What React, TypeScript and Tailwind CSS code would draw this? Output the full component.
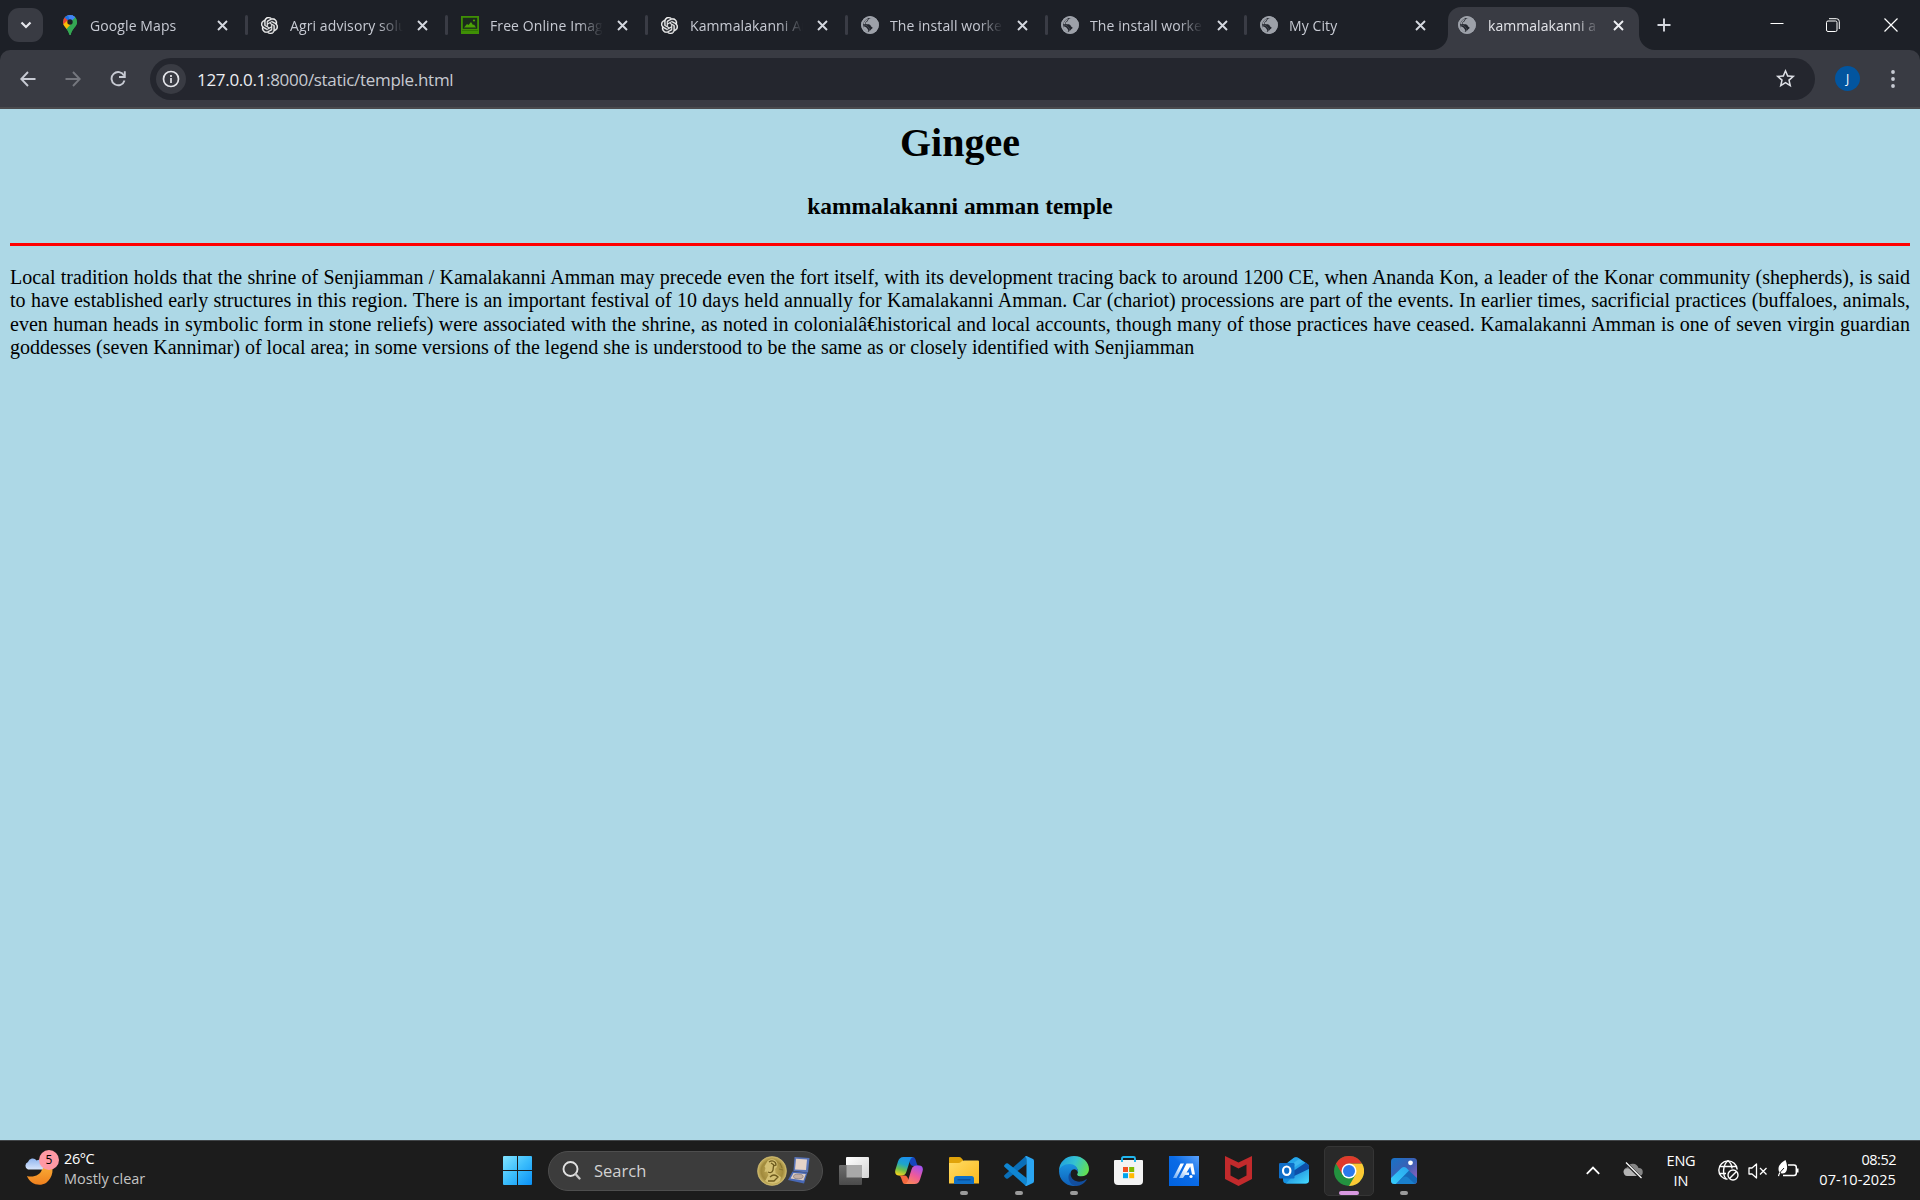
import React from "react";
import { SiOpenai } from "react-icons/si";
import { MdStarBorder } from "react-icons/md";

type Kids = { children?: React.ReactNode };

/* ---------- favicons ---------- */

const MapsPin = () => (
  <svg width="18" height="20" viewBox="0 0 18 20" className="shrink-0">
    <clipPath id="pin">
      <path d="M9 0a7 7 0 0 1 7 7c0 5-5.200 6.500-6.200 12.400q-.8 1.200-1.600 0C7.200 13.500 2 12 2 7a7 7 0 0 1 7-7z" />
    </clipPath>
    <g clipPath="url(#pin)">
      <path d="M0 0h18v20H0z" fill="#34a853" />
      <path d="M1 13 L12 0 H0 V15 Z" fill="#ea4335" />
      <path d="M3.500 2.500 L9 7 L16.500 -1 H4Z" fill="#1a73e8" />
      <path d="M9 7 L14.500 1 L11 -1 L7 0Z" fill="#4285f4" />
      <path d="M16 1 L14.500 2 L5 14 L9 20 H18 V1Z" fill="#34a853" />
      <path d="M14.500 2 L9 7.500 L8 4 L11 0 Z" fill="#4285f4" />
      <path d="M2 9.500 L6.500 5.500 L10 9 L5 14.600Z" fill="#fbbc04" />
    </g>
    <circle cx="9" cy="7" r="2.700" fill="#1d2027" />
  </svg>
);

const OpenAi = () => (
  <div className="flex w-[18px] shrink-0">
    <SiOpenai size={17} color="#f4f4f4" stroke="#f4f4f4" strokeWidth={0.5} />
  </div>
);

const Picture = () => (
  <svg width="18" height="18" viewBox="0 0 18 18" className="shrink-0">
    <path d="M0 0h18v18H0z" fill="#3f8f05" />
    <path d="M1.800 1.800h14.400v11H1.800z" fill="#1b2a1c" />
    <path d="M3 11.500 L6 8 L7.500 9 L10 6 L12 9 L13 8.500 L15 11.500Z" fill="#4ba206" />
    <circle cx="13" cy="4.500" r="1.100" fill="#4ba206" />
    <path d="M1 14.500h16" stroke="#2f7504" />
  </svg>
);

const Globe = () => (
  <svg width="18" height="18" viewBox="0 0 18 18" className="shrink-0">
    <circle cx="9" cy="9" r="8.900" fill="#9da1a9" />
    <path
      d="M10.500 1.900 C8 2.200 7.600 3.200 7 4.300 C6.400 5.300 6.600 5.700 5.600 6 C4.700 6.300 4.300 7.300 5 8.100 C6 8.600 7.600 8.200 8.800 8.700 C10.200 9.300 9.400 10.700 10.900 10.900 C11.600 11 11.900 12.200 11 12.700 C9.600 13.300 9.600 14.300 8.600 15.200 C9.300 12.900 8.300 12.600 7.600 11.800 C7 10.400 6.500 10.100 5 9.600 C4 9.400 2.900 9.200 1.900 9.300 C2 6 4.500 2.400 8 1.900Z"
      fill="#23262e"
    />
    <circle cx="9" cy="9" r="8" fill="none" stroke="#9da1a9" strokeWidth="1.700" />
    <path d="M3 6.500C4 4.500 5.500 3.300 7.200 2.600C6.300 4 6 5.300 5 5.800C4.200 6.200 4 7.500 4.500 8.300L2.300 8.300Z" fill="#9da1a9" />
    <path d="M2.200 9.300C3.300 9.300 5.400 9.300 6.600 10.200C7.700 11 7.400 12.200 8.600 12.700C9.300 13.300 8.400 14.600 7.900 16C4.500 15.600 2.300 12.800 2.200 9.300Z" fill="#23262e" />
    <path d="M2.200 10.500C4 10.500 5.200 11 6 12.200C6.500 13.300 7.500 13.500 7.300 16C4.500 15.600 2.300 13.500 2.200 10.500Z" fill="#9da1a9" />
  </svg>
);

const Cross = ({ color = "#d5d8df" }: { color?: string }) => (
  <svg width="11" height="11" viewBox="0 0 11 11" className="shrink-0">
    <path d="M1 1l9 9M10 1l-9 9" stroke={color} strokeWidth="1.900" />
  </svg>
);

/* ---------- tab strip ---------- */

const TITLE =
  "ml-[11px] mt-[2px] w-[113px] overflow-hidden whitespace-nowrap text-[14px] leading-5 tracking-[0.1px] text-[#c7cad3] [mask-image:linear-gradient(to_right,#000_88px,transparent_113px)]";

const Tab = ({ icon, title, width }: { icon: React.ReactNode; title: string; width: string }) => (
  <div className={`flex h-[50px] shrink-0 items-center pl-[13px] ${width}`}>
    {icon}
    <div className={TITLE}>{title}</div>
    <div className="ml-[14px] flex">
      <Cross />
    </div>
    <div className="ml-auto h-5 w-[3px] shrink-0 rounded-full bg-[#3a3c45]" />
  </div>
);

const TabStrip = () => (
  <div className="flex h-[50px] items-center bg-[#1d2027]">
    <div className="ml-2 flex h-[34px] w-[35px] shrink-0 items-center justify-center rounded-[11px] bg-[#393b43]">
      <svg width="12" height="8" viewBox="0 0 12 8">
        <path d="M1.500 1.500 6 6l4.500-4.500" fill="none" stroke="#e6e7ec" strokeWidth="2.200" />
      </svg>
    </div>
    <div className="ml-[5px] flex">
      <Tab width="w-[200px]" icon={<MapsPin />} title="Google Maps" />
      <Tab width="w-[200px]" icon={<OpenAi />} title="Agri advisory solutions" />
      <Tab width="w-[200px]" icon={<Picture />} title="Free Online Image Editor" />
      <Tab width="w-[200px]" icon={<OpenAi />} title="Kammalakanni Amman" />
      <Tab width="w-[200px]" icon={<Globe />} title="The install worked" />
      <Tab width="w-[199px]" icon={<Globe />} title="The install worked" />
      <div className="flex h-[50px] w-[185px] shrink-0 items-center pl-[13px]">
        <Globe />
        <div className={TITLE}>My City</div>
        <div className="ml-[13px] flex">
          <Cross />
        </div>
      </div>
    </div>
    <div className="flex h-[50px] items-end">
      <svg width="16" height="16" viewBox="0 0 16 16">
        <path d="M0 16A16 16 0 0 0 16 0V16Z" fill="#393b43" />
      </svg>
      <div className="flex h-[43px] w-[191px] items-center rounded-t-[13px] bg-[#393b43] pb-[7px] pl-[10px]">
        <Globe />
        <div className="mt-[2px] ml-[12px] w-[107px] shrink-0 overflow-hidden text-[14px] leading-5 tracking-[0.05px] whitespace-nowrap text-[#e3e4e9] [mask-image:linear-gradient(to_right,#000_88px,transparent_112px)]">
          kammalakanni amman
        </div>
        <div className="ml-[18px] flex">
          <Cross color="#eeeff3" />
        </div>
      </div>
      <svg width="16" height="16" viewBox="0 0 16 16">
        <path d="M16 16A16 16 0 0 1 0 0V16Z" fill="#393b43" />
      </svg>
    </div>
    <svg width="14" height="14" viewBox="0 0 14 14" className="ml-[2px] shrink-0">
      <path d="M7 .5v13M.5 7h13" stroke="#d5d8df" strokeWidth="1.900" />
    </svg>
    <div className="mr-[22px] ml-auto flex items-center">
      <svg width="14" height="14" viewBox="0 0 14 14" className="mr-[42px]">
        <path d="M.5 5.500h13" stroke="#fff" />
      </svg>
      <svg width="14" height="14" viewBox="0 0 14 14" className="mr-[44px]">
        <rect x=".5" y="3" width="10.500" height="10.500" rx="1.500" fill="none" stroke="#fff" />
        <path d="M3 .7h7.500q2.800 0 2.800 2.800V11" fill="none" stroke="#fff" />
      </svg>
      <svg width="14" height="14" viewBox="0 0 14 14">
        <path d="M.5.500l13 13M13.500.500l-13 13" stroke="#fff" strokeWidth="1.200" />
      </svg>
    </div>
  </div>
);

/* ---------- toolbar ---------- */

const Toolbar = () => (
  <div className="bg-[#1d2027]">
    <div className="flex h-[59px] items-center rounded-t-[10px] border-b-2 border-[#4a4a4d] bg-[#393b43]">
      <svg width="16" height="16" viewBox="0 0 16 16" className="ml-5">
        <path d="M15.500 8H1.500M8 1 1.300 8 8 15" fill="none" stroke="#c7cad3" strokeWidth="1.900" />
      </svg>
      <svg width="16" height="16" viewBox="0 0 16 16" className="ml-[29px]">
        <path d="M.5 8h14M8 1l6.700 7L8 15" fill="none" stroke="#75777e" strokeWidth="1.900" />
      </svg>
      <svg width="16" height="16" viewBox="0 0 16 16" className="ml-[29px]">
        <path d="M14 4.600A6.600 6.600 0 1 0 14.500 9.500" fill="none" stroke="#c7cad3" strokeWidth="1.900" />
        <path d="M14.800.300V6H9" fill="none" stroke="#c7cad3" strokeWidth="1.900" />
      </svg>
      <div className="ml-6 flex h-[42px] w-[1665px] items-center rounded-full bg-[#24262e] pl-[6px]">
        <div className="flex size-[30px] items-center justify-center rounded-full bg-[#393b43]">
          <svg width="18" height="18" viewBox="0 0 18 18">
            <circle cx="9" cy="9" r="7.500" fill="none" stroke="#e3e4e9" strokeWidth="1.700" />
            <path d="M9 8v5M9 5v1.900" stroke="#e3e4e9" strokeWidth="1.700" />
          </svg>
        </div>
        <div className="mt-[2px] ml-[11px] text-[17px] leading-6 tracking-[-0.3px] text-[#c7cad1]">
          <span className="text-[#eceef2]">127.0.0.1</span>:8000/static/temple.html
        </div>
        <MdStarBorder size={23} color="#dcdee4" className="mr-[18px] ml-auto" />
      </div>
      <div className="ml-[20px] flex size-[25px] items-center justify-center rounded-full bg-[#02559f] text-[12px] text-white">J</div>
      <svg width="4" height="18" viewBox="0 0 4 18" className="ml-[31px]">
        <circle cx="2" cy="2" r="1.900" fill="#c7cad3" />
        <circle cx="2" cy="9" r="1.900" fill="#c7cad3" />
        <circle cx="2" cy="16" r="1.900" fill="#c7cad3" />
      </svg>
    </div>
  </div>
);

/* ---------- web page ---------- */

const Page = () => (
  <div className="h-[1031px] bg-[#add8e6] px-[10px] pt-[11px] font-['Liberation_Serif','Times_New_Roman',serif] text-black">
    <h1 className="text-center text-[40px] leading-[46px] font-bold">Gingee</h1>
    <h3 className="mt-[27px] text-center text-[23.400px] leading-[27px] font-bold">kammalakanni amman temple</h3>
    <div className="mt-[23px] h-[3px] bg-[#ff0000]" />
    <p className="mt-[20px] text-justify text-[20px] leading-[23.250px]">
      Local tradition holds that the shrine of Senjiamman / Kamalakanni Amman may precede even the fort itself, with its
      development tracing back to around 1200 CE, when Ananda Kon, a leader of the Konar community (shepherds), is said
      to have established early structures in this region. There is an important festival of 10 days held annually for
      Kamalakanni Amman. Car (chariot) processions are part of the events. In earlier times, sacrificial practices
      (buffaloes, animals, even human heads in symbolic form in stone reliefs) were associated with the shrine, as noted
      in colonialâ€historical and local accounts, though many of those practices have ceased. Kamalakanni Amman is one
      of seven virgin guardian goddesses (seven Kannimar) of local area; in some versions of the legend she is
      understood to be the same as or closely identified with Senjiamman
    </p>
  </div>
);

/* ---------- taskbar icons ---------- */

const Gradients = () => (
  <svg width="0" height="0" className="absolute">
    <defs>
      <linearGradient id="win" x1="0" y1="0" x2="1" y2="1">
        <stop offset="0" stopColor="#82e3ff" />
        <stop offset=".5" stopColor="#3bbdfc" />
        <stop offset="1" stopColor="#0a90f5" />
      </linearGradient>
      <linearGradient id="moon" x1="0" y1="0" x2="0" y2="1">
        <stop offset="0" stopColor="#fbb83c" />
        <stop offset="1" stopColor="#f0801e" />
      </linearGradient>
      <linearGradient id="cloud" x1="0" y1="0" x2="0" y2="1">
        <stop offset="0" stopColor="#8fb4ee" />
        <stop offset="1" stopColor="#d8e5fb" />
      </linearGradient>
      <radialGradient id="gold">
        <stop offset="0" stopColor="#c9b25e" />
        <stop offset=".75" stopColor="#a18a3c" />
        <stop offset="1" stopColor="#cdb868" />
      </radialGradient>
      <linearGradient id="tvw" x1="0" y1="0" x2="1" y2="1">
        <stop offset="0" stopColor="#ffffff" />
        <stop offset="1" stopColor="#d4d4d4" />
      </linearGradient>
      <linearGradient id="tvg" x1="0" y1="0" x2="0" y2="1">
        <stop offset="0" stopColor="#6e6e6e" />
        <stop offset="1" stopColor="#4a4a4a" />
      </linearGradient>
      <linearGradient id="cpa" x1=".6" y1="0" x2=".3" y2="1">
        <stop offset="0" stopColor="#1b8fee" />
        <stop offset=".4" stopColor="#1fa5c8" />
        <stop offset=".7" stopColor="#6cc04a" />
        <stop offset="1" stopColor="#f3d21c" />
      </linearGradient>
      <linearGradient id="cpb" x1=".7" y1="0" x2=".2" y2="1">
        <stop offset="0" stopColor="#a552ee" />
        <stop offset=".5" stopColor="#ee5a9a" />
        <stop offset="1" stopColor="#fb8b55" />
      </linearGradient>
      <linearGradient id="fold" x1="0" y1="0" x2="1" y2="1">
        <stop offset="0" stopColor="#ffdc66" />
        <stop offset="1" stopColor="#fbb91c" />
      </linearGradient>
      <linearGradient id="edgeTop" x1="0" y1=".3" x2="1" y2=".6">
        <stop offset="0" stopColor="#1fa0e0" />
        <stop offset=".5" stopColor="#36c3d0" />
        <stop offset="1" stopColor="#63e04e" />
      </linearGradient>
      <linearGradient id="edgeMid" x1="0" y1="0" x2="0" y2="1">
        <stop offset="0" stopColor="#1a93e0" />
        <stop offset="1" stopColor="#0f5fb8" />
      </linearGradient>
      <linearGradient id="asus" x1="1" y1="0" x2="0" y2="1">
        <stop offset="0" stopColor="#5ba2fb" />
        <stop offset=".45" stopColor="#0a6be6" />
        <stop offset="1" stopColor="#0062e0" />
      </linearGradient>
      <linearGradient id="aw" x1="0" y1="1" x2="1" y2="0">
        <stop offset="0" stopColor="#6aaaf5" />
        <stop offset=".6" stopColor="#ffffff" />
      </linearGradient>
      <linearGradient id="photo" x1="0" y1="0" x2="1" y2="1">
        <stop offset="0" stopColor="#1673c8" />
        <stop offset=".5" stopColor="#3c5fb4" />
        <stop offset="1" stopColor="#a661c0" />
      </linearGradient>
      <linearGradient id="hill" x1="0" y1="1" x2="1" y2="0">
        <stop offset="0" stopColor="#35d0fb" />
        <stop offset="1" stopColor="#2ba6ee" />
      </linearGradient>
      <linearGradient id="mail" x1="0" y1="0" x2="1" y2="1">
        <stop offset="0" stopColor="#1478d2" />
        <stop offset="1" stopColor="#46dcff" />
      </linearGradient>
    </defs>
  </svg>
);

const Weather = () => (
  <svg width="34" height="36" viewBox="0 0 34 36" className="shrink-0">
    <path d="M3 25C9 27 17 24 18 18L25 10C31 16 29 27 22 32C15 36 6 33 3 25Z" fill="url(#moon)" />
    <path d="M4 18.500a4 4 0 0 1 0-7.500 4.800 4.800 0 0 1 8.600-1.500A4.500 4.500 0 0 1 18 18.500Z" fill="url(#cloud)" />
  </svg>
);

const StartIcon = () => (
  <svg width="29" height="29" viewBox="0 0 29 29">
    <path d="M1 0h13v14H0V1a1 1 0 0 1 1-1zM15 0h13a1 1 0 0 1 1 1v13H15zM0 15h14v14H1a1 1 0 0 1-1-1zM15 15h14v13a1 1 0 0 1-1 1H15z" fill="url(#win)" />
  </svg>
);

const Medal = () => (
  <svg width="30" height="30" viewBox="0 0 30 30">
    <circle cx="15" cy="15" r="14.500" fill="url(#gold)" stroke="#d3bf74" strokeWidth=".6" />
    <path d="M10.500 5C14 2 20 3 20.500 8L20 11 18 13 18.500 17 24 21 23 25C18 29 12 28 8 25L11.500 19 10 15.500 7.500 16 8.500 12 7.500 10.500Z" fill="#d4c073" />
    <path d="M12 6C15 4 19 5 19 9L16.500 10 16 14C15 17 13 17 11 16M14 7l3 2M13 21C15 19 18 18 21 21L17 25 11 25" fill="none" stroke="#6d5a1e" strokeWidth="1.300" />
    <path d="M23 7l2 5M22 13l4 1" stroke="#7b6828" strokeWidth=".7" />
  </svg>
);

const MedalBox = () => (
  <svg width="22" height="27" viewBox="0 0 22 27">
    <path d="M6.500 0 21.500 1 20 15.500 5.500 14Z" fill="#5a75b8" />
    <path d="M8 1.800 19 2.500 18 13 7 12.500Z" fill="#e6d3c8" />
    <path d="M4.500 14.500 19.500 15.500 16 26.500 0 23Z" fill="#4868b5" />
    <path d="M5.500 16 17.800 17 15.500 23.500 2.500 21.500Z" fill="#dccdc6" />
    <ellipse cx="10.300" cy="19.500" rx="4.800" ry="2.300" fill="#c2aea6" stroke="#77706f" strokeWidth=".6" />
  </svg>
);

const TaskView = () => (
  <svg width="30" height="28" viewBox="0 0 30 28">
    <rect x="7" y="0" width="23" height="21" rx="1" fill="url(#tvw)" />
    <rect x="0" y="8" width="23" height="20" rx="1" fill="url(#tvg)" />
    <path d="M7.500 8H23v12.500H7.500z" fill="#a9a9a9" />
  </svg>
);

const Copilot = () => (
  <svg width="28" height="27" viewBox="0 0 28 27">
    <path d="M14 0H17C20 0 20.500 2 21.300 5 22 8 23 9 25 9H18.500C16.500 9 15.500 8 14.500 5Z" fill="#1646bd" />
    <path d="M14 27H10C8 27 7.500 25 6.500 22 5.800 19.500 5 18.500 3 18.500H9.500C12 18.500 12.500 20 13.500 23Z" fill="#f4693e" />
    <path d="M8.500 0H18C16 .5 15.300 2.500 14.500 5L11.500 14.500C10.500 17.500 9 18.500 6.500 18.500H4C.5 18.500-.5 16 .5 12.500L3 4.500C4 1.500 5.500 0 8.500 0Z" fill="url(#cpa)" />
    <path d="M19.500 27H10C12 26.500 12.700 24.500 13.500 22L16.500 12.500C17.500 9.500 19 8.500 21.500 8.500H24C27.500 8.500 28.500 11 27.500 14.500L25 22.500C24 25.500 22.500 27 19.500 27Z" fill="url(#cpb)" />
  </svg>
);

const Explorer = () => (
  <svg width="30" height="27" viewBox="0 0 30 27">
    <path d="M1 0h9q1.500 0 2.500 1.200L14 3v5H0V1q0-1 1-1z" fill="#e0a30a" />
    <path d="M0 6H9.500Q11 6 12 5L13 4Q14 3.500 15 3.500H29q1 0 1 1V26.500H0Z" fill="url(#fold)" />
    <path d="M5 27V21.500Q5 19 7.500 19h15q2.500 0 2.500 2.500V27z" fill="#0f6fc6" />
    <path d="M8.500 22.800h13" stroke="#0a4a94" strokeWidth="1.200" />
  </svg>
);

const VsCode = () => (
  <svg width="30" height="30" viewBox="0 0 30 30">
    <path d="M22.500 8 4 22.500Q3 23.200 2 22.400L.5 21Q-.4 20 .6 19L21 .8 23 0Z" fill="#0a6fb8" />
    <path d="M22.500 22 4 7.500Q3 6.800 2 7.600L.5 9Q-.4 10 .6 11L21 29.200 23 30Z" fill="#0f86d2" />
    <path d="M22.500 0 29 3Q30 3.500 30 5V25Q30 26.500 29 27L22.500 30 20.800 29.200Q22.500 29 22.500 27V3Q22.500 1 20.800.8Z" fill="#2aa5f2" />
  </svg>
);

const Edge = () => (
  <svg width="30" height="30" viewBox="0 0 30 30">
    <path d="M0 15C0 6 7 0 15 0C24 0 30 6.500 30 13C30 18 26 20.500 22 20.500C19 20.500 17.500 19.500 18.500 17.500C20 14 17 9 11 9C5 9 1 12 0 15Z" fill="url(#edgeTop)" />
    <path d="M0 15C.5 11 5 8 10.500 8C16 8 19.500 12 18.800 16.500C18 13.500 13.500 12.500 11.500 17C9.500 22 13.500 28 19 29.500C10 32 0 25.500 0 15Z" fill="url(#edgeMid)" />
    <path d="M12 15.500C10 22 16 26.500 22 25.500C25 25 26.500 23.500 28 23C26 27.500 21 30.200 16.500 30C10 28.500 7 20 12 15.500Z" fill="#124e9e" />
    <path d="M12 15.500C13.500 12.500 17.500 12.500 18.500 16C18.500 17 17.500 18 18 19.300C19.500 21 24 20.800 27 19.500C24 23.500 13 23 12 15.500Z" fill="#1b1c1e" />
  </svg>
);

const Store = () => (
  <svg width="29" height="29" viewBox="0 0 29 29">
    <path d="M1 4h27q1 0 1 1v20q0 4-4 4H4q-4 0-4-4V5q0-1 1-1z" fill="#f3f3f3" />
    <path d="M8 6V2.500Q8 1 9.500 1h10Q21 1 21 2.500V6" fill="none" stroke="#21b7ef" strokeWidth="1.900" />
    <path d="M9 11h5v5H9z" fill="#f25022" />
    <path d="M15.200 11h5v5h-5z" fill="#7fba00" />
    <path d="M9 17.200h5v5H9z" fill="#00a4ef" />
    <path d="M15.200 17.200h5v5h-5z" fill="#ffb900" />
  </svg>
);

const Asus = () => (
  <svg width="30" height="30" viewBox="0 0 30 30">
    <path d="M0 0h30v30H0z" fill="url(#asus)" />
    <path d="M4 22 11.500 7.500H15L7.500 22ZM10 22 17.500 7.500H24L26 18.500H23L21.300 10.500 17.500 16.500H20V19H16L14 22Z" fill="url(#aw)" />
    <circle cx="22" cy="20.500" r="1.600" fill="#fff" />
  </svg>
);

const Mcafee = () => (
  <svg width="27" height="30" viewBox="0 0 27 30">
    <path d="M0 0 13.500 6.500 27 0V23L13.500 30 0 23ZM5.500 8.500V19.500L13.500 23.800 21.500 19.500V8.500L13.500 12.500Z" fill="#c22a2c" fillRule="evenodd" />
  </svg>
);

const Outlook = () => (
  <svg width="30" height="27" viewBox="0 0 30 27">
    <path d="M4 9 15 .8Q17 -.5 19 .8L29 7.500Q30 8.300 30 10V23Q30 26.500 26.500 26.500H8Q4 26.500 4 23Z" fill="#1490e0" />
    <path d="M9 5.500 15 .8Q17 -.3 19 .8L29 7.500 17 14.500Z" fill="#25a6ea" />
    <path d="M13 7 20 2 24 4.500 13 12Z" fill="#55c8f5" opacity=".5" />
    <path d="M30 8.500V12L15 20V13.500L27 5.500Z" fill="#0d4fa8" />
    <path d="M30 12V23Q30 26.500 26.500 26.500H7L13 20Z" fill="url(#mail)" />
    <rect x="0" y="6" width="15.500" height="15.500" rx="1.200" fill="#0f6ec8" />
    <ellipse cx="7.700" cy="13.700" rx="3.700" ry="4.200" fill="none" stroke="#fff" strokeWidth="2.200" />
  </svg>
);

const ChromeIcon = () => (
  <svg width="30" height="30" viewBox="0 0 30 30">
    <circle cx="15" cy="15" r="15" fill="#23923f" />
    <path d="M15 7.500H28A15 15 0 0 1 15 30L21.500 18.750Z" fill="#fcc934" />
    <path d="M2 7.500A15 15 0 0 1 28 7.500H15L8.500 18.750Z" fill="#e03a2c" />
    <circle cx="15" cy="15" r="7.500" fill="#fff" />
    <circle cx="15" cy="15" r="6" fill="#2b79ec" />
  </svg>
);

const Photos = () => (
  <svg width="26" height="26" viewBox="0 0 26 26">
    <clipPath id="ph">
      <rect width="26" height="26" rx="3.500" />
    </clipPath>
    <g clipPath="url(#ph)">
      <path d="M0 0h26v26H0z" fill="url(#photo)" />
      <path d="M15 10 27 21V27H6Z" fill="#1669b8" />
      <path d="M-1 21 10.500 10Q13 8 15.500 10L18 12.500 4 27H-1Z" fill="url(#hill)" />
      <path d="M12 19.500Q14.500 17.500 17 19.500L24 26H5Z" fill="#1a80cd" />
    </g>
    <circle cx="19.500" cy="4.800" r="2.400" fill="#fff" />
  </svg>
);

/* ---------- taskbar ---------- */

const Cell = ({ children, running }: Kids & { running?: boolean }) => (
  <div className="relative flex h-[60px] w-[55px] items-center justify-center">
    {children}
    {running && <div className="absolute bottom-[6px] h-1 w-2 rounded-full bg-[#9b9b9b]" />}
  </div>
);

const Taskbar = () => (
  <div className="flex h-[60px] items-center border-t border-[#414548] bg-[#1c1c1c] text-[14.500px] leading-5 text-white">
    <div className="flex w-[490px] items-center pb-[3px] pl-[24px]">
      <div className="relative flex">
        <Weather />
        <div className="absolute -top-[1px] left-[15px] flex size-5 items-center justify-center rounded-full bg-[#ff99a4] text-[12px] text-black">5</div>
      </div>
      <div className="ml-[6px]">
        <div className="tracking-[-0.4px]">26°C</div>
        <div className="text-[#c4c4c4]">Mostly clear</div>
      </div>
    </div>
    <div className="flex w-[58px] justify-center pr-[3px]">
      <StartIcon />
    </div>
    <div className="flex h-10 w-[275px] items-center rounded-full border border-[#4e4e4e] bg-[#3c3c3c] pl-[13px]">
      <svg width="19" height="19" viewBox="0 0 19 19">
        <circle cx="8.500" cy="8" r="7" fill="none" stroke="#e2e2e2" strokeWidth="1.900" />
        <path d="M13.500 13l4 4.500" stroke="#c8c8c8" strokeWidth="2.300" strokeLinecap="round" />
      </svg>
      <div className="ml-[13px] text-[16.500px] text-[#d2d2d2]">Search</div>
      <div className="mr-[12px] ml-auto flex items-center gap-[1px]">
        <Medal />
        <MedalBox />
      </div>
    </div>
    <div className="ml-[3px] flex">
      <Cell><TaskView /></Cell>
      <Cell><Copilot /></Cell>
      <Cell running><Explorer /></Cell>
      <Cell running><VsCode /></Cell>
      <Cell running><Edge /></Cell>
      <Cell><Store /></Cell>
      <Cell><Asus /></Cell>
      <Cell><Mcafee /></Cell>
      <Cell><Outlook /></Cell>
      <Cell>
        <div className="relative flex size-[50px] items-center justify-center rounded-[5px] border border-[#353535] bg-[#292929]">
          <ChromeIcon />
          <div className="absolute bottom-0 h-1 w-5 rounded-full bg-[#d898e0]" />
        </div>
      </Cell>
      <Cell running><Photos /></Cell>
    </div>
    <div className="mr-6 ml-auto flex items-center">
      <svg width="14" height="9" viewBox="0 0 14 9">
        <path d="M.8 7.800 7 1.600l6.200 6.200" fill="none" stroke="#fff" strokeWidth="1.800" />
      </svg>
      <svg width="20" height="17" viewBox="0 0 20 17" className="ml-[23px]">
        <path d="M4.500 14a4.300 4.300 0 0 1-.3-8.500A6 6 0 0 1 15.500 6 4 4 0 0 1 16 14Z" fill="#858585" />
        <path d="M1 8Q5 5 9.500 9L16 14H4.500A4.300 4.300 0 0 1 1 8Z" fill="#b4b4b4" />
        <path d="M2.500.500 18 16" stroke="#1c1c1c" strokeWidth="3" />
        <path d="M3 .5 18.500 16" stroke="#fff" strokeWidth="1.200" />
      </svg>
      <div className="ml-[20px] w-[36px] text-center">
        <div className="tracking-[-0.2px]">ENG</div>
        <div>IN</div>
      </div>
      <svg width="21" height="21" viewBox="0 0 21 21" className="ml-[19px]">
        <g fill="none" stroke="#fff" strokeWidth="1.400">
          <path d="M9.500 19.300A9.200 9.200 0 1 1 19.200 9.500" />
          <path d="M8 19C4.500 15 4.500 5 10 .8C13 3 14 6 14 8.500M1.500 6.500h17M1.500 13.500H8" />
          <circle cx="15" cy="15" r="5" />
          <path d="M11.500 18.500l7-7" />
        </g>
      </svg>
      <svg width="20" height="16" viewBox="0 0 20 16" className="ml-[9px]">
        <g fill="none" stroke="#fff" strokeWidth="1.300">
          <path d="M1 5h3l4.500-4v14L4 11H1Z" strokeLinejoin="round" />
          <path d="M12 5l6.500 6.500M18.500 5 12 11.500" />
        </g>
      </svg>
      <svg width="21" height="18" viewBox="0 0 21 18" className="mb-[3px] ml-[10px]">
        <path d="M10 5h6q2.300 0 2.300 2.300v6q0 2.200-2.300 2.200H5" fill="none" stroke="#fff" strokeWidth="1.500" />
        <path d="M19 8.500h1.500v4H19z" fill="#fff" />
        <path d="M7.500 0C3 3 .5 5 .5 9 .5 12 2.500 13.500 4.500 13.500 8 13.500 9.500 10 9 6Q8.800 3 7.500 0Z" fill="#fff" />
        <path d="M1 16.500Q2 11 6 8" fill="none" stroke="#1c1c1c" />
        <path d="M.5 16Q1 14 2 12.500" stroke="#fff" fill="none" strokeWidth="1.200" />
      </svg>
      <div className="ml-[16px] w-[81px] pb-[2px] text-right whitespace-nowrap">
        <div className="tracking-[-0.5px]">08:52</div>
        <div className="tracking-[0.1px]">07-10-2025</div>
      </div>
    </div>
  </div>
);

export default function App() {
  return (
    <div className="h-[1200px] w-[1920px] overflow-hidden font-['Open_Sans','Noto_Sans',sans-serif]">
      <Gradients />
      <TabStrip />
      <Toolbar />
      <Page />
      <Taskbar />
    </div>
  );
}
